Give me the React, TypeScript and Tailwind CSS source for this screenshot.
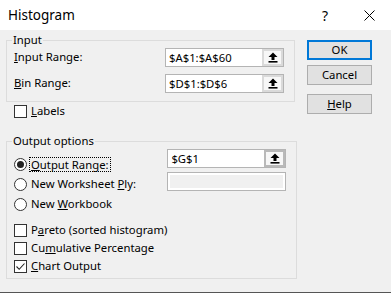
import React from "react";

function UpArrow() {
  return (
    <svg width="10" height="11" viewBox="0 0 10 11" className="block">
      <path d="M5 0.5 L9.5 5 H6.5 V8 H3.5 V5 H0.5 Z" fill="#000" />
      <rect x="0.5" y="9" width="9" height="1.6" fill="#000" />
    </svg>
  );
}

function RefField({ value, focused }: { value: string; focused?: boolean }) {
  return (
    <div className="flex h-[19px] w-[119px] border border-[#b4b4b4] bg-white">
      <span className="flex-1 pl-[3px] leading-[17px]">{value}</span>
      <span
        className={`flex w-[21px] items-center justify-center border-2 bg-[#f7f7f7] ${
          focused ? "border-[#b9b9b9]" : "border-[#dadada]"
        }`}
      >
        <UpArrow />
      </span>
    </div>
  );
}

function Checkbox({ checked }: { checked?: boolean }) {
  return (
    <span className="flex h-[13px] w-[13px] shrink-0 items-center justify-center border border-[#333] bg-white">
      {checked && (
        <svg width="11" height="11" viewBox="0 0 11 11">
          <path d="M1.5 5.5 L4.2 8.3 L9.5 2.5" fill="none" stroke="#222" strokeWidth="1.1" />
        </svg>
      )}
    </span>
  );
}

function Radio({ checked }: { checked?: boolean }) {
  return (
    <span className="flex h-[13px] w-[13px] shrink-0 items-center justify-center rounded-full border border-[#333] bg-white">
      {checked && <span className="h-[7px] w-[7px] rounded-full bg-[#222]" />}
    </span>
  );
}

function Button({ children, primary }: { children: React.ReactNode; primary?: boolean }) {
  return (
    <button
      className={`h-[20px] w-[65px] bg-[#e1e1e1] leading-none ${
        primary ? "border-2 border-[#0078d7]" : "border border-[#adadad]"
      }`}
    >
      {children}
    </button>
  );
}

export default function App() {
  return (
    <div className="flex h-[293px] w-[391px] flex-col overflow-hidden whitespace-nowrap border-b border-[#555] bg-[#f0f0f0] font-['Noto_Sans',sans-serif] text-[11.3px] text-black">
      <div className="flex h-[30px] shrink-0 items-center bg-white pl-[8px]">
        <span className="text-[13.5px]">Histogram</span>
        <span className="ml-auto text-[14px]">?</span>
        <svg width="11" height="11" viewBox="0 0 11 11" className="ml-[36px] mr-[16px]">
          <path d="M0.5 0.5 L10.5 10.5 M10.5 0.5 L0.5 10.5" stroke="#000" strokeWidth="1" />
        </svg>
      </div>

      <div className="flex pl-[6px]">
        <div className="flex w-[289px] flex-col">
          <fieldset className="mt-[2px] border border-[#dcdcdc]">
            <legend className="ml-[5px] px-[1px] leading-[16px]">Input</legend>
            <div className="flex flex-col gap-[7px] pb-[8px] pl-[7px] pr-[10px]">
              <div className="flex h-[19px] items-center justify-between">
                <span>
                  <u>I</u>nput Range:
                </span>
                <RefField value="$A$1:$A$60" />
              </div>
              <div className="flex h-[19px] items-center justify-between">
                <span>
                  <u>B</u>in Range:
                </span>
                <RefField value="$D$1:$D$6" />
              </div>
            </div>
          </fieldset>

          <label className="mt-[3px] flex h-[13px] items-center gap-[4px] pl-[8px]">
            <Checkbox />
            <span>
              <u>L</u>abels
            </span>
          </label>

          <fieldset className="mt-[15px] border border-[#dcdcdc]">
            <legend className="ml-[5px] px-[1px] leading-[16px]">Output options</legend>
            <div className="flex pb-[3px] pl-[7px] pr-[10px]">
              <div className="flex shrink-0 flex-col pt-[5px]">
                <div className="flex h-[20px] items-center gap-[4px]">
                  <Radio checked />
                  <span className="-ml-[2px] border border-dotted border-black px-[1px] leading-[13px]">
                    <u>O</u>utput Range:
                  </span>
                </div>
                <div className="flex h-[20px] items-center gap-[4px]">
                  <Radio />
                  <span>
                    New Worksheet <u>P</u>ly:
                  </span>
                </div>
                <div className="flex h-[20px] items-center gap-[4px]">
                  <Radio />
                  <span>
                    New <u>W</u>orkbook
                  </span>
                </div>
                <div className="mt-[7px] flex flex-col">
                  <div className="flex h-[18px] items-center gap-[4px]">
                    <Checkbox />
                    <span>
                      P<u>a</u>reto (sorted histogram)
                    </span>
                  </div>
                  <div className="flex h-[18px] items-center gap-[4px]">
                    <Checkbox />
                    <span>
                      Cu<u>m</u>ulative Percentage
                    </span>
                  </div>
                  <div className="flex h-[18px] items-center gap-[4px]">
                    <Checkbox checked />
                    <span>
                      <u>C</u>hart Output
                    </span>
                  </div>
                </div>
              </div>
              <div className="ml-auto flex flex-col gap-[4px]">
                <RefField value="$G$1" focused />
                <div className="h-[19px] w-[119px] border border-[#b4b4b4] bg-white p-[2px]">
                  <div className="h-full w-full bg-[#f0f0f0]" />
                </div>
              </div>
            </div>
          </fieldset>
        </div>

        <div className="ml-[12px] mt-[10px] flex flex-col">
          <Button primary>OK</Button>
          <div className="mt-[5px]">
            <Button>Cancel</Button>
          </div>
          <div className="mt-[9px]">
            <Button>
              <u>H</u>elp
            </Button>
          </div>
        </div>
      </div>
    </div>
  );
}
